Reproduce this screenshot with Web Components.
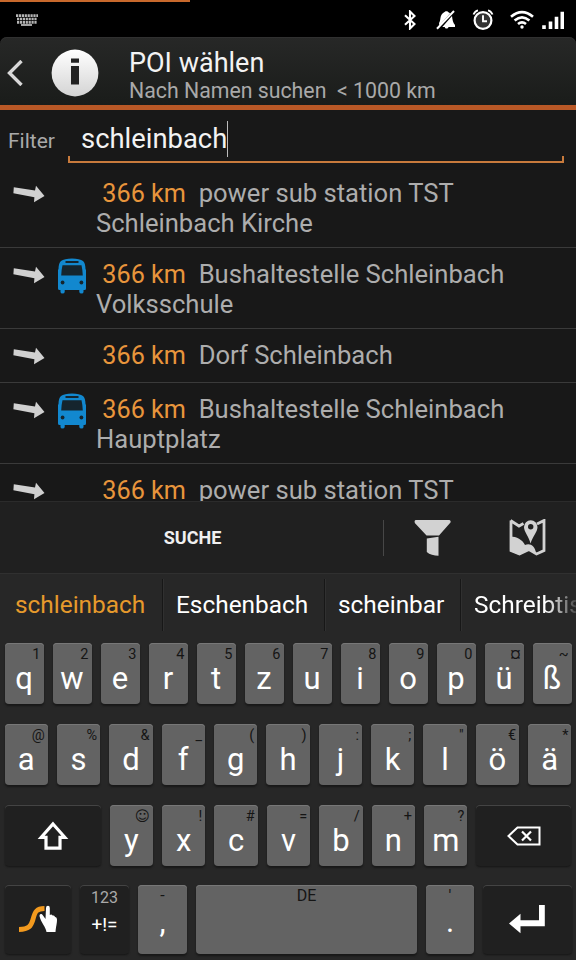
<!DOCTYPE html>
<html lang="de">
<head>
<meta charset="utf-8">
<title>POI wählen</title>
<style>
    html, body { margin: 0; height: 100%; background: #000; }
    body { font-family: Roboto, "DejaVu Sans", sans-serif; overflow: hidden; }
</style>
</head>
<body>
<poi-screen></poi-screen>

<script>
// Small helper: shadow root + markup
class BaseElement extends HTMLElement {
    constructor() {
        super();
        this.attachShadow({ mode: 'open' });
    }
    connectedCallback() {
        this.shadowRoot.innerHTML = this.render();
    }
}

// Icons
const ICONS = {
    keyboard: [22, 12, `<g stroke="#b5b5b5" fill="none" stroke-width="2.6"><path d="M0 1.6H22M1 5H21M1 8.400H21" stroke-dasharray="2.2 .7"/><path d="M5 11H16" stroke-width="1.8"/></g>`],
    bluetooth: [12, 20, `<path d="M1 5.200L10.500 14L6 18.500V1.500L10.500 6L1 14.800" fill="none" stroke="#fff" stroke-width="2.100"/>`],
    bell: [20, 20, `<path d="M3 13C5 10 3.700 7 6 4C7.500 2 9 2.300 9.500 1.200H11.500C12 2.500 13 2.200 14.200 3.200L3.400 15.500ZM16 6C16.500 10 17 13 19 15V17H12.500C12 19 9 19 8.800 17H6.300Z" fill="#fff"/><path d="M1 18.800L18 1" stroke="#fff" stroke-width="2"/>`],
    alarm: [22, 21, `<circle cx="11" cy="11.500" r="8.400" fill="#333" stroke="#fff" stroke-width="2.200"/><path d="M11 6.200V12.200H15M1.500 5.500Q3 2 6 1.400M20.500 5.500Q19 2 16 1.400" fill="none" stroke="#fff" stroke-width="1.900"/>`],
    wifi: [24, 19, `<g fill="none" stroke="#fff" stroke-width="2.600"><path d="M1 6.800Q12-2.600 23 6.800"/><path d="M4.600 10.600Q12 4.200 19.400 10.600"/><path d="M8 14Q12 10.600 16 14"/></g><circle cx="12" cy="17" r="1.700" fill="#fff"/>`],
    signal: [22, 18, `<path d="M2 14.300V18M8.500 10.500V18M14.500 5.800V18M20.300.8V18" stroke="#fff" stroke-width="3.600"/>`],
    back: [16, 26, `<path d="M14.500 1L2.500 13L14.500 25" fill="none" stroke="#d8d8d8" stroke-width="3.400"/>`],
    info: [48, 48, `<defs><linearGradient id="g" x2="0" y2="1"><stop stop-color="#fff"/><stop offset="1" stop-color="#d4d4d4"/></linearGradient></defs><circle cx="24" cy="24" r="23.400" fill="url(#g)"/><path d="M20 9.500H28V13.800H20ZM20 17H28V35.500H20Z" fill="#222"/>`],
    arrow: [32, 18, `<path d="M.8 2.300L22 5.600L23 .8L31.500 11L21 17.300L21.400 12.200L.4 8.200Z" fill="#d0d0d0"/>`],
    bus: [30, 36, `<path d="M15 .5C20 .5 24 1.400 26 3C27.600 4.200 28.400 7 28.500 11L29 12V30.500Q29 32 27.500 32H26.500V34Q26.500 35.500 24.500 35.500Q22.500 35.500 22.300 34V32H7.700V34Q7.500 35.500 5.500 35.500Q3.500 35.500 3.500 34V32H2.500Q1 32 1 30.500V12L1.500 11C1.600 7 2.400 4.200 4 3C6 1.400 10 .5 15 .5Z" fill="#1288cf"/><path d="M8.500 3H21.500V5H8.500ZM5.500 7.300H24.500Q25.600 12 25.800 17.500H4.200Q4.400 12 5.500 7.300Z" fill="#15252e"/><circle cx="5.600" cy="24.500" r="1.900" fill="#15252e"/><circle cx="24.400" cy="24.500" r="1.900" fill="#15252e"/>`],
    funnel: [38, 38, `<path d="M1.500 1H35.500Q37.300 1.500 36.500 3.500L25 16.500H12.500L.8 4Q0 1.500 1.500 1ZM12.800 19.500L24.500 17.800V36.800C20 36.800 15.500 35.500 12.800 33Z" fill="#d2d2d2"/>`],
    map: [38, 38, `<path d="M1.500 1.500L10 7L14.500 4.500M28 5L35 1.500V31.500L27.500 35L20 30.500L10.500 35L2 31.500V1.500" fill="none" stroke="#d2d2d2" stroke-width="2.800"/><path d="M1 17.500C8 17.500 13 20.500 16 26C21 23.500 26 27 27 34L20 30.500L10.500 36L1 32Z" fill="#d2d2d2"/><path d="M21.500 24.500C20 17.500 15 13 15 8A6.600 6.600 0 0 1 28.500 8C28.500 13 23.500 17.500 21.500 24.500Z" fill="#d2d2d2"/><circle cx="21.700" cy="7.800" r="2.700" fill="#202020"/>`],
    shift: [32, 30, `<path d="M16 3L27.800 16.300H23V27.200H9V16.300H4.200Z" fill="none" stroke="#fff" stroke-width="3.200"/>`],
    backspace: [34, 20, `<path d="M1.500 10L10.500 1.500H32.500V18.500H10.500Z" fill="none" stroke="#fff" stroke-width="2"/><path d="M15 5.500L24 14.500M24 5.500L15 14.500" stroke="#fff" stroke-width="2.200"/>`],
    swype: [38, 28, `<path d="M0 24.500C10 24.500 12 21 14 14.500C16 6 18 3.700 25.500 3.500" fill="none" stroke="#f39a1e" stroke-width="4.800"/><path d="M27 3Q27 .8 29 .8Q30.800 .8 30.800 3V10Q32.500 8.800 33.600 10.600Q35.600 9.800 36 12Q38 11.800 38 14.500C38 19 37 21 36.500 27H27.500C27 22 22 18 20.500 11C20.500 8.600 22.500 8.300 24 10.500L26.500 14Z" fill="#fff"/>`],
    enter: [36, 30, `<path d="M0 19.500L11.500 9.800V16.300H30V1H35.800V22.300H11.500V29.200Z" fill="#fff"/>`]
};

class UiIcon extends BaseElement {
    render() {
        const [w, h, body] = ICONS[this.getAttribute('name')];
        return `<style>
                :host { display: block; flex: none; width: ${w}px; height: ${h}px; }
                svg { display: block; }
            </style>
            <svg width="${w}" height="${h}" viewBox="0 0 ${w} ${h}">${body}</svg>`;
    }
}
customElements.define('ui-icon', UiIcon);

// Status bar
class StatusBar extends BaseElement {
    render() {
        return `<style>
                :host { display: block; height: 37px; background: #000; }
                .progress { width: 190px; height: 2px; background: #c8692c; }
                .row { display: flex; align-items: center; height: 35px; padding: 0 12px 0 16px; }
                .gap { flex: 1; }
            </style>
            <div class="progress"></div>
            <div class="row">
                <ui-icon name="keyboard"></ui-icon>
                <span class="gap"></span>
                <ui-icon name="bluetooth" style="margin-right:20px"></ui-icon>
                <ui-icon name="bell" style="margin-right:16px"></ui-icon>
                <ui-icon name="alarm" style="margin-right:16px"></ui-icon>
                <ui-icon name="wifi" style="margin-right:8px"></ui-icon>
                <ui-icon name="signal"></ui-icon>
            </div>`;
    }
}
customElements.define('status-bar', StatusBar);

// Header with back arrow, title and subtitle
class TitleBar extends BaseElement {
    render() {
        return `<style>
                :host {
                    display: flex; align-items: center; box-sizing: border-box; height: 73px; padding: 4px 0 0 7px;
                    background: linear-gradient(#272827, #1a1c1a); border-bottom: 5px solid #b95826;
                    border-radius: 7px 7px 0 0; box-shadow: inset 0 1px #303030;
                }
                ui-icon[name=info] { margin-left: 28px; }
                .text { margin: 5px 0 0 30px; }
                .text div { white-space: pre; }
                .title { font-size: 27px; line-height: 30px; color: #f3f3f3; }
                .sub { font-size: 21.300px; line-height: 26px; color: #a9a9a9; }
            </style>
            <ui-icon name="back"></ui-icon>
            <ui-icon name="info"></ui-icon>
            <div class="text">
                <div class="title"><slot name="title"></slot></div>
                <div class="sub"><slot name="sub"></slot></div>
            </div>`;
    }
}
customElements.define('title-bar', TitleBar);

class FilterField extends BaseElement {
    render() {
        return `<style>
                :host { display: flex; box-sizing: border-box; height: 56.500px; padding: 0 12px 3.500px 8px; }
                .label { width: 60px; font-size: 21px; line-height: 63px; color: #a9a9a9; }
                .field { flex: 1; display: flex; flex-direction: column; }
                .value { display: flex; align-items: center; height: 46px; margin: 6px 0 -6px; padding-left: 13px; font-size: 27.400px; color: #f3f3f3; }
                .caret { width: 1px; height: 36px; background: #bbb; }
                .line { height: 5px; border: solid #c87a3c; border-width: 0 2px 2px; }
            </style>
            <div class="label">Filter</div>
            <div class="field">
                <div class="value"><slot></slot><span class="caret"></span></div>
                <div class="line"></div>
            </div>`;
    }
}
customElements.define('filter-field', FilterField);

// One search hit
class PoiItem extends BaseElement {
    render() {
        const icon = this.getAttribute('icon');
        return `<style>
                :host { display: flex; box-sizing: border-box; min-height: 54px; border-bottom: 1px solid #3a3a3a; padding: 11px 0 9px 13px; }
                .arrow { width: 44px; padding-top: 7px; }
                .icon { width: 39px; margin-top: -1px; }
                .text { flex: 1; white-space: pre-wrap; font-size: 25.600px; line-height: 30px; color: #adadad; }
                b { font-weight: 400; font-size: 25.200px; line-height: 1; color: #e8953c; }
            </style>
            <div class="arrow"><ui-icon name="arrow"></ui-icon></div>
            <div class="icon">${icon ? `<ui-icon name="${icon}"></ui-icon>` : ''}</div>
            <div class="text"> <b>${this.getAttribute('distance')}</b>  <slot></slot></div>`;
    }
}
customElements.define('poi-item', PoiItem);

class ToolBar extends BaseElement {
    render() {
        return `<style>
                :host {
                    display: flex; align-items: center; box-sizing: border-box; height: 72px; padding-right: 29px;
                    background: #202020; border-top: 1px solid #2b2b2b;
                }
                .search { width: 383px; text-align: center; font-size: 18px; font-weight: 700; color: #f0f0f0; }
                .search span { display: inline-block; padding-left: 2px; }
                .sep { width: 1px; height: 36px; background: #474747; margin-right: 30px; }
                .gap { flex: 1; }
            </style>
            <div class="search"><span><slot></slot></span></div>
            <div class="sep"></div>
            <ui-icon name="funnel"></ui-icon>
            <span class="gap"></span>
            <ui-icon name="map"></ui-icon>`;
    }
}
customElements.define('tool-bar', ToolBar);

// Word suggestions above the keys
class SuggestionBar extends BaseElement {
    render() {
        const words = this.getAttribute('words').split(',');
        return `<style>
                :host { display: flex; height: 56px; padding-top: 6px; overflow: hidden; }
                span {
                    flex: none; box-sizing: border-box; height: 52px; line-height: 52px; padding-left: 13px;
                    font-size: 24.400px; color: #fff; border-left: 1px solid #171717; box-shadow: inset 1px 0 #303030;
                }
                span:nth-of-type(1) { color: #e69a2c; border: 0; box-shadow: none; width: 162px; padding-left: 15px; }
                span:nth-of-type(2) { width: 162px; }
                span:nth-of-type(3) { width: 136px; }
                span:nth-of-type(4) {
                    width: 116px; overflow: hidden; white-space: nowrap;
                    -webkit-mask-image: linear-gradient(90deg, #000 86px, rgba(0,0,0,.15));
                }
            </style>${words.map(w => `<span>${w}</span>`).join('')}`;
    }
}
customElements.define('suggestion-bar', SuggestionBar);

class KeyButton extends BaseElement {
    render() {
        const hint = this.getAttribute('hint') || '';
        return `<style>
                :host {
                    display: flex; flex-direction: column; flex: 1 1 0; min-width: 0; box-sizing: border-box;
                    background: #636363; border-radius: 4px; color: #fff;
                    box-shadow: inset 0 1px #777, 0 2px 2px #181818;
                }
                :host([dark]) { background: #202020; box-shadow: inset 0 1px #444, 0 1px 2px #161616; }
                .hint { height: 22px; line-height: 23px; padding-right: 3px; text-align: right; font-size: 14.500px; color: #151515; }
                .label {
                    flex: 1; display: flex; align-items: center; justify-content: center; box-sizing: border-box;
                    min-height: 0; padding-bottom: 12px; font-size: 31px; line-height: 30px;
                }
                :host([wide]) .hint { text-align: center; padding: 0; font-size: 16px; line-height: 22px; }
                :host([wide]) .label { padding-bottom: 17px; }
                :host([wide][mode]) .hint { color: #aaa; height: 25px; line-height: 25px; }
                :host([wide][mode]) .label { font-size: 19px; padding-bottom: 13px; }
                :host([plain]) .hint { display: none; }
                :host([plain]) .label { padding: 0; }
            </style>
            <div class="hint">${hint}</div>
            <div class="label"><slot></slot></div>`;
    }
}
customElements.define('key-button', KeyButton);

class KeyBoard extends BaseElement {
    keys(labels, hints) {
        return [...labels].map((c, i) => `<key-button hint="${hints[i].replace('&', '&amp;')}">${c}</key-button>`).join('');
    }
    render() {
        return `<style>
                :host {
                    display: flex; flex-direction: column; height: 387px; background: #272727;
                    box-shadow: inset 0 1px #303030;
                }
                .keys { display: grid; grid-template-rows: 61px 61px 61px 69px; row-gap: 20px; padding: 8px 4.500px 0; }
                .row { display: flex; gap: 9px; }
                .last { margin-top: -1.500px; height: 69px; }
            </style>
            <suggestion-bar words="schleinbach,Eschenbach,scheinbar,Schreibtisch"></suggestion-bar>
            <div class="keys">
                <div class="row">${this.keys('qwertzuiopüß', '1234567890¤~')}</div>
                <div class="row">${this.keys('asdfghjklöä', '@%&_():;″€*')}</div>
                <div class="row">
                    <key-button dark plain style="flex:0 0 96px"><ui-icon name="shift"></ui-icon></key-button>
                    ${this.keys('yxcvbnm', '☺!#=/+?')}
                    <key-button dark plain style="flex:0 0 95px"><ui-icon name="backspace"></ui-icon></key-button>
                </div>
                <div class="row last">
                    <key-button dark plain style="flex:0 0 66.500px"><ui-icon name="swype"></ui-icon></key-button>
                    <key-button dark wide mode hint="123" style="flex:0 0 49px">+!=</key-button>
                    <key-button wide hint="-" style="flex:0 0 49px">,</key-button>
                    <key-button wide hint="DE"></key-button>
                    <key-button wide hint="'" style="flex:0 0 48px">.</key-button>
                    <key-button dark plain style="flex:0 0 88.500px"><ui-icon name="enter"></ui-icon></key-button>
                </div>
            </div>`;
    }
}
customElements.define('key-board', KeyBoard);

class PoiScreen extends BaseElement {
    render() {
        return `<style>
                :host { display: flex; flex-direction: column; width: 576px; height: 960px; overflow: hidden; background: #181818; }
                status-bar, title-bar, filter-field, tool-bar, key-board { flex: none; }
                .list { flex: 1; min-height: 0; overflow: hidden; }
                .top { background: #000; }
            </style>
            <status-bar></status-bar>
            <div class="top"><title-bar><span slot="title">POI wählen</span><span slot="sub">Nach Namen suchen  &lt; 1000 km</span></title-bar></div>
            <filter-field>schleinbach</filter-field>
            <div class="list">
                <poi-item distance="366 km">power sub station TST Schleinbach Kirche</poi-item>
                <poi-item distance="366 km" icon="bus">Bushaltestelle Schleinbach Volksschule</poi-item>
                <poi-item distance="366 km">Dorf Schleinbach</poi-item>
                <poi-item distance="366 km" icon="bus">Bushaltestelle Schleinbach Hauptplatz</poi-item>
                <poi-item distance="366 km">power sub station TST</poi-item>
            </div>
            <tool-bar>SUCHE</tool-bar>
            <key-board></key-board>`;
    }
}
customElements.define('poi-screen', PoiScreen);
</script>
</body>
</html>
